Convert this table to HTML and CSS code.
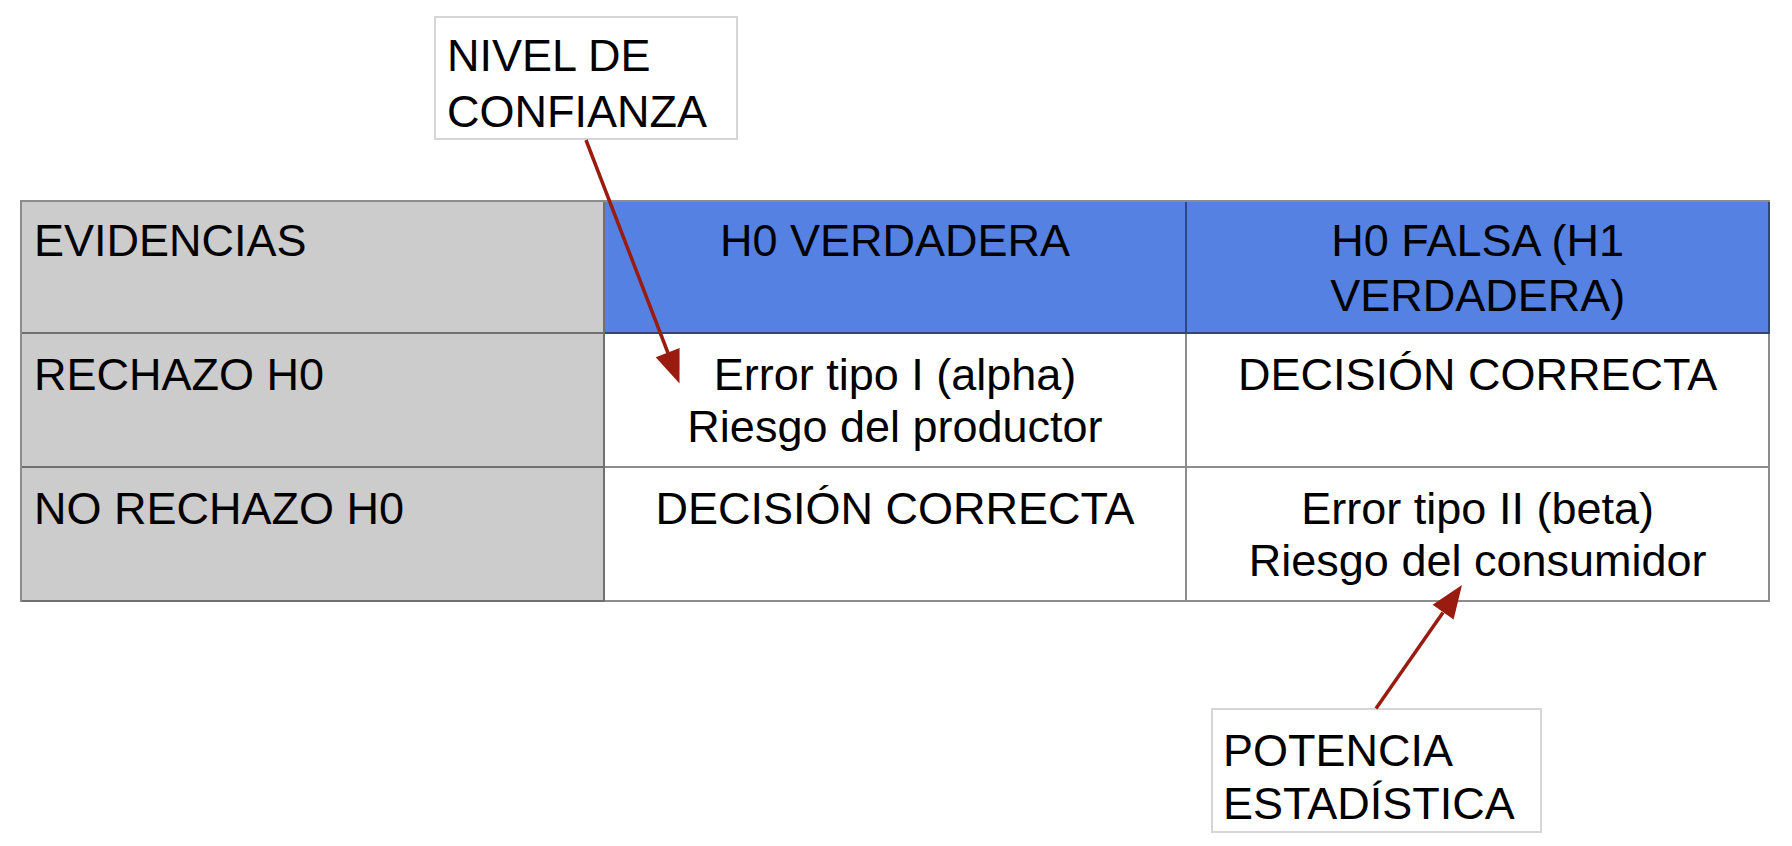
FILE: index.html
```html
<!DOCTYPE html>
<html lang="es">
<head>
<meta charset="utf-8">
<title>Errores tipo I y II</title>
<link rel="stylesheet" href="styles.css">
</head>
<body>
<div class="canvas">
  <div class="note note-top">NIVEL DE<br>CONFIANZA</div>

  <div class="grid">
    <div class="cell side head">EVIDENCIAS</div>
    <div class="cell blue head center">H0 VERDADERA</div>
    <div class="cell blue head center">H0 FALSA (H1<br>VERDADERA)</div>

    <div class="cell side body">RECHAZO H0</div>
    <div class="cell body center">Error tipo I (alpha)<br>Riesgo del productor</div>
    <div class="cell body center">DECISIÓN CORRECTA</div>

    <div class="cell side body">NO RECHAZO H0</div>
    <div class="cell body center">DECISIÓN CORRECTA</div>
    <div class="cell body center">Error tipo II (beta)<br>Riesgo del consumidor</div>
  </div>

  <div class="note note-bottom">POTENCIA<br>ESTADÍSTICA</div>

  <svg class="arrows" width="1792" height="846" viewBox="0 0 1792 846" aria-hidden="true">
    <line x1="586" y1="140" x2="668" y2="353" class="arrow-line"/>
    <polygon points="679.5,383.5 679.6,348.1 655.7,357.3" class="arrow-head"/>
    <line x1="1376" y1="708.5" x2="1443" y2="612.5" class="arrow-line"/>
    <polygon points="1462,585 1453.6,619.4 1432.6,604.8" class="arrow-head"/>
  </svg>
</div>
</body>
</html>
```

FILE: styles.css
```css
html, body {
  margin: 0;
  padding: 0;
  background: #ffffff;
}

.canvas {
  position: relative;
  width: 1792px;
  height: 846px;
  padding-top: 16px;
  box-sizing: border-box;
  font-family: "Liberation Sans", Arial, sans-serif;
  font-size: 45px;
  color: #000000;
  overflow: hidden;
}

.note {
  box-sizing: border-box;
  border: 2px solid #d6d6d6;
  background: #ffffff;
  white-space: nowrap;
}

.note-top {
  margin-left: 434px;
  width: 304px;
  height: 124px;
  padding: 10px 11px 0;
  line-height: 56px;
}

.note-bottom {
  margin-top: 106px;
  margin-left: 1211px;
  width: 331px;
  height: 125px;
  padding: 14px 10px 0;
  line-height: 53px;
}

.grid {
  margin-top: 60px;
  margin-left: 20px;
  width: 1750px;
  box-sizing: border-box;
  display: grid;
  grid-template-columns: repeat(3, 1fr);
  grid-template-rows: 132px 134px 134px;
  border-top: 2px solid rgba(0, 0, 0, 0.45);
  border-left: 2px solid rgba(0, 0, 0, 0.45);
}

.cell {
  box-sizing: border-box;
  border-right: 2px solid rgba(0, 0, 0, 0.45);
  border-bottom: 2px solid rgba(0, 0, 0, 0.45);
  padding-left: 12px;
  padding-right: 10px;
  background: #ffffff;
  white-space: nowrap;
}

.head {
  padding-top: 11px;
  line-height: 55px;
}

.body {
  padding-top: 15px;
  line-height: 52px;
}

.side {
  background: #cccccc;
}

.blue {
  background: #5582e2;
}

.center {
  text-align: center;
  padding-left: 10px;
}

.arrows {
  position: absolute;
  top: 0;
  left: 0;
  pointer-events: none;
}

.arrow-line {
  stroke: #9a1b0f;
  stroke-width: 3.5;
  stroke-linecap: butt;
}

.arrow-head {
  fill: #9a1b0f;
}
```
